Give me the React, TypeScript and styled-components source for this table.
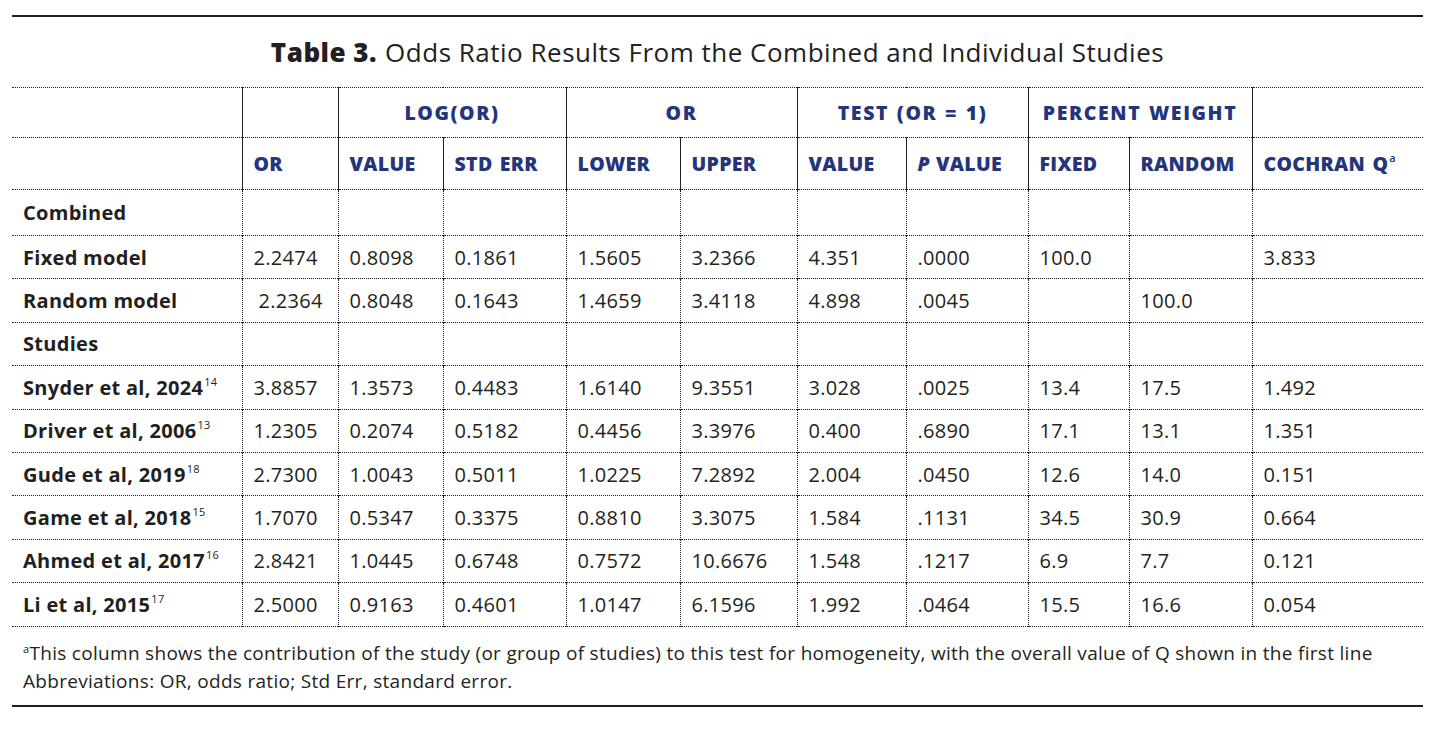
import React from 'react';
import styled, { createGlobalStyle } from 'styled-components';

const GlobalStyle = createGlobalStyle`
  html, body {
    margin: 0;
    padding: 0;
    background: #ffffff;
  }
  body {
    font-family: "Open Sans", Lato, "Liberation Sans", sans-serif;
    color: #231f20;
  }
`;

const Page = styled.div`
  width: 1439px;
  height: 729px;
  padding: 15px 16px 0 12px;
  box-sizing: border-box;
`;

const Frame = styled.div`
  border-top: 2px solid #231f20;
  border-bottom: 2px solid #231f20;
  padding-bottom: 10px;
`;

const Title = styled.h2`
  margin: 0;
  height: 70px;
  display: flex;
  align-items: center;
  justify-content: center;
  font-size: 26px;
  font-weight: 400;
  letter-spacing: 0.5px;
  color: #231f20;

  b {
    font-weight: 800;
    margin-right: 8px;
  }
`;

const Table = styled.table`
  width: 100%;
  border-collapse: collapse;
  table-layout: fixed;
  font-size: 20px;
  letter-spacing: 0.3px;
`;

const Col = styled.col<{ $w: number }>`
  width: ${(p) => p.$w}px;
`;

const Row = styled.tr<{ $h: number }>`
  height: ${(p) => p.$h}px;
  border-top: 1px dotted #231f20;
  border-bottom: 1px dotted #231f20;
`;

const HeadCell = styled.th<{ $group?: boolean; $solid?: boolean }>`
  padding: 0 11px;
  text-align: ${(p) => (p.$group ? 'center' : 'left')};
  vertical-align: middle;
  font-weight: 800;
  color: #24357c;
  font-size: 19.5px;
  letter-spacing: ${(p) => (p.$group ? 1.6 : 0.3)}px;
  word-spacing: ${(p) => (p.$group ? 1 : 2)}px;
  white-space: nowrap;
  & + & {
    border-left: 1px ${(p) => (p.$solid ? 'solid' : 'dotted')} #231f20;
  }
  i {
    font-style: italic;
    margin-right: 6px;
  }
  sup {
    font-size: 11px;
    font-weight: 600;
    vertical-align: 9px;
    margin-left: 1px;
  }
`;

const LabelCell = styled.td`
  padding: 0 11px;
  font-weight: 700;
  white-space: nowrap;
  sup {
    font-size: 11px;
    font-weight: 400;
    vertical-align: 9px;
    margin-left: 1px;
  }
`;

const ValueCell = styled.td<{ $indent?: boolean }>`
  padding: 0 0 0 ${(p) => (p.$indent ? 16 : 11)}px;
  border-left: 1px dotted #231f20;
  white-space: nowrap;
`;

const Notes = styled.div`
  padding: 8px 11px 0;
  font-size: 19px;
  letter-spacing: 0.3px;
  line-height: 28px;
  white-space: nowrap;
  sup {
    font-size: 11px;
    vertical-align: 7px;
  }
`;

const widths = [230, 96, 105, 123, 114, 117, 109, 122, 101, 123, 171];

type Row = { label: React.ReactNode; values?: string[]; indent?: boolean };

const rows: Row[] = [
  { label: 'Combined' },
  {
    label: 'Fixed model',
    values: ['2.2474', '0.8098', '0.1861', '1.5605', '3.2366', '4.351', '.0000', '100.0', '', '3.833'],
  },
  {
    label: 'Random model',
    values: ['2.2364', '0.8048', '0.1643', '1.4659', '3.4118', '4.898', '.0045', '', '100.0', ''],
    indent: true,
  },
  { label: 'Studies' },
  {
    label: <>Snyder et al, 2024<sup>14</sup></>,
    values: ['3.8857', '1.3573', '0.4483', '1.6140', '9.3551', '3.028', '.0025', '13.4', '17.5', '1.492'],
  },
  {
    label: <>Driver et al, 2006<sup>13</sup></>,
    values: ['1.2305', '0.2074', '0.5182', '0.4456', '3.3976', '0.400', '.6890', '17.1', '13.1', '1.351'],
  },
  {
    label: <>Gude et al, 2019<sup>18</sup></>,
    values: ['2.7300', '1.0043', '0.5011', '1.0225', '7.2892', '2.004', '.0450', '12.6', '14.0', '0.151'],
  },
  {
    label: <>Game et al, 2018<sup>15</sup></>,
    values: ['1.7070', '0.5347', '0.3375', '0.8810', '3.3075', '1.584', '.1131', '34.5', '30.9', '0.664'],
  },
  {
    label: <>Ahmed et al, 2017<sup>16</sup></>,
    values: ['2.8421', '1.0445', '0.6748', '0.7572', '10.6676', '1.548', '.1217', '6.9', '7.7', '0.121'],
  },
  {
    label: <>Li et al, 2015<sup>17</sup></>,
    values: ['2.5000', '0.9163', '0.4601', '1.0147', '6.1596', '1.992', '.0464', '15.5', '16.6', '0.054'],
  },
];

const App: React.FC = () => {
  return (
    <Page>
      <GlobalStyle />
      <Frame>
        <Title>
          <b>Table 3.</b> Odds Ratio Results From the Combined and Individual Studies
        </Title>
        <Table>
          <colgroup>
            {widths.map((w, i) => (
              <Col key={i} $w={w} />
            ))}
          </colgroup>
          <thead>
            <Row $h={50}>
              <HeadCell />
              <HeadCell />
              <HeadCell colSpan={2} $group>LOG(OR)</HeadCell>
              <HeadCell colSpan={2} $group $solid>OR</HeadCell>
              <HeadCell colSpan={2} $group $solid>TEST (OR = 1)</HeadCell>
              <HeadCell colSpan={2} $group $solid>PERCENT WEIGHT</HeadCell>
              <HeadCell $solid />
            </Row>
            <Row $h={52}>
              <HeadCell />
              <HeadCell>OR</HeadCell>
              <HeadCell>VALUE</HeadCell>
              <HeadCell>STD ERR</HeadCell>
              <HeadCell>LOWER</HeadCell>
              <HeadCell>UPPER</HeadCell>
              <HeadCell>VALUE</HeadCell>
              <HeadCell><i>P</i>VALUE</HeadCell>
              <HeadCell>FIXED</HeadCell>
              <HeadCell>RANDOM</HeadCell>
              <HeadCell>COCHRAN Q<sup>a</sup></HeadCell>
            </Row>
          </thead>
          <tbody>
            {rows.map((r, i) => (
              <Row key={i} $h={i === 0 ? 46 : 43.4}>
                <LabelCell>{r.label}</LabelCell>
                {(r.values ?? Array(10).fill('')).map((v, j) => (
                  <ValueCell key={j} $indent={r.indent && j === 0}>
                    {v}
                  </ValueCell>
                ))}
              </Row>
            ))}
          </tbody>
        </Table>
        <Notes>
          <sup>a</sup>This column shows the contribution of the study (or group of studies) to this test for homogeneity, with the overall value of Q shown in the first line
          <br />
          Abbreviations: OR, odds ratio; Std Err, standard error.
        </Notes>
      </Frame>
    </Page>
  );
};

export default App;
